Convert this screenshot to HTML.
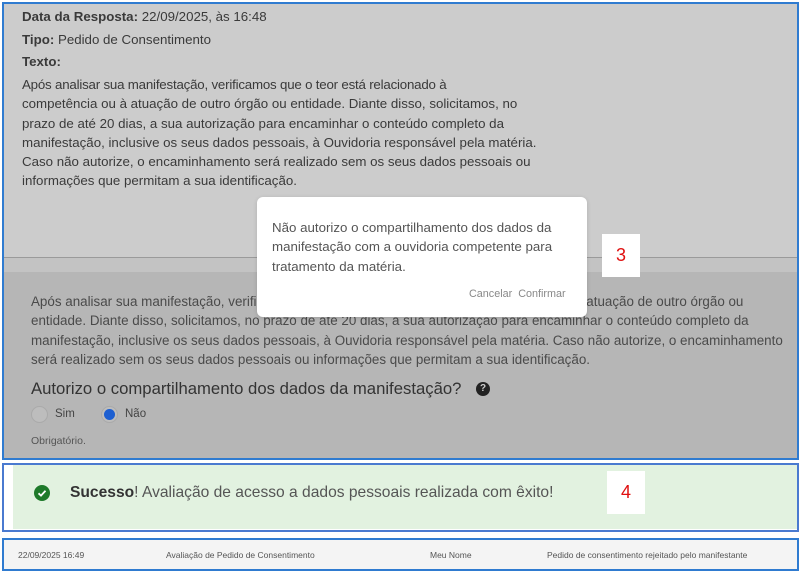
<!DOCTYPE html>
<html><head><meta charset="utf-8"><style>
*{margin:0;padding:0;box-sizing:border-box}
body{width:800px;height:573px;background:#fff;font-family:"Liberation Sans",sans-serif;position:relative;overflow:hidden}
.a{position:absolute;white-space:nowrap}
.t{font-size:13.3px;color:#3a3a3a}
.l{font-size:13.4px;color:#4a4a4a}
</style></head><body>
<div class="a" style="left:2px;top:2px;width:797px;height:458px;border:2px solid #2f7bd0;background:#cccccc;overflow:hidden">
  <div class="a" style="left:0;top:253px;width:100%;height:1px;background:#9a9a9a"></div>
  <div class="a" style="left:0;top:254px;width:100%;height:14px;background:#c3c3c3"></div>
  <div class="a" style="left:0;top:268px;width:100%;height:200px;background:#b6b6b6"></div>
</div>
<div class="a t" style="left:22px;top:9px"><b>Data da Resposta:</b> 22/09/2025, às 16:48</div>
<div class="a t" style="left:22px;top:32px"><b>Tipo:</b> Pedido de Consentimento</div>
<div class="a t" style="left:22px;top:54px"><b>Texto:</b></div>
<div class="a t" style="left:22px;top:75px;line-height:19.3px"><span style="letter-spacing:-0.2px">Após analisar sua manifestação, verificamos que o teor está relacionado à</span><br>competência ou à atuação de outro órgão ou entidade. Diante disso, solicitamos, no<br>prazo de até 20 dias, a sua autorização para encaminhar o conteúdo completo da<br>manifestação, inclusive os seus dados pessoais, à Ouvidoria responsável pela matéria.<br>Caso não autorize, o encaminhamento será realizado sem os seus dados pessoais ou<br>informações que permitam a sua identificação.</div>
<div class="a l" style="left:31px;top:292px;line-height:19.3px">Após analisar sua manifestação, verificamos que o teor está relacionado à competência ou à atuação de outro órgão ou<br>entidade. Diante disso, solicitamos, no prazo de até 20 dias, a sua autorização para encaminhar o conteúdo completo da<br>manifestação, inclusive os seus dados pessoais, à Ouvidoria responsável pela matéria. Caso não autorize, o encaminhamento<br>será realizado sem os seus dados pessoais ou informações que permitam a sua identificação.</div>
<div class="a" style="left:31px;top:379px;font-size:16.7px;color:#333">Autorizo o compartilhamento dos dados da manifestação?</div>
<div class="a" style="left:476px;top:382px;width:14px;height:14px;border-radius:50%;background:#222;color:#ccc;font-size:10px;font-weight:bold;text-align:center;line-height:14px">?</div>
<div class="a" style="left:31px;top:406px;width:17px;height:17px;border-radius:50%;border:1px solid #aaa;background:#bdbdbd"></div>
<div class="a" style="left:55px;top:408px;font-size:11.5px;color:#444">Sim</div>
<div class="a" style="left:101px;top:406px;width:17px;height:17px;border-radius:50%;border:1px solid #aaa;background:#bdbdbd"></div>
<div class="a" style="left:104px;top:409px;width:11px;height:11px;border-radius:50%;background:#1d5fd1"></div>
<div class="a" style="left:125px;top:408px;font-size:11.5px;color:#444">Não</div>
<div class="a" style="left:31px;top:435px;font-size:10.5px;color:#555">Obrigatório.</div>

<div class="a" style="left:257px;top:197px;width:330px;height:120px;background:#fff;border-radius:6px;box-shadow:0 1px 4px rgba(0,0,0,.15)"></div>
<div class="a" style="left:272px;top:218px;font-size:13.3px;color:#555;line-height:19.3px">Não autorizo o compartilhamento dos dados da<br>manifestação com a ouvidoria competente para<br>tratamento da matéria.</div>
<div class="a" style="left:469px;top:288px;font-size:10.8px;color:#888">Cancelar&nbsp; Confirmar</div>

<div class="a" style="left:602px;top:234px;width:38px;height:43px;background:#fff;color:#e01010;font-size:18px;text-align:center;line-height:43px">3</div>

<div class="a" style="left:2px;top:463px;width:797px;height:69px;border:2px solid #4a7ad0;background:#fff"></div>
<div class="a" style="left:13px;top:465px;width:784px;height:64px;background:#e2f2e0"></div>
<div class="a" style="left:34px;top:485px;width:16px;height:16px;border-radius:50%;background:#1e7a2a"></div>
<svg class="a" style="left:34px;top:485px" width="16" height="16"><path d="M4.5 8.3 L7 10.6 L11.5 5.8" stroke="#fff" stroke-width="1.8" fill="none"/></svg>
<div class="a" style="left:70px;top:484px;font-size:15.6px;color:#555"><b style="color:#333">Sucesso</b>! Avaliação de acesso a dados pessoais realizada com êxito!</div>
<div class="a" style="left:607px;top:471px;width:38px;height:43px;background:#fff;color:#e01010;font-size:18px;text-align:center;line-height:43px">4</div>

<div class="a" style="left:2px;top:538px;width:797px;height:33px;border:2px solid #2f7bd0;background:#f4f4f4"></div>
<div class="a" style="left:18px;top:550px;font-size:8.5px;color:#555">22/09/2025 16:49</div>
<div class="a" style="left:166px;top:550px;font-size:8.5px;color:#555">Avaliação de Pedido de Consentimento</div>
<div class="a" style="left:430px;top:550px;font-size:8.5px;color:#555">Meu Nome</div>
<div class="a" style="left:547px;top:550px;font-size:8.5px;color:#555">Pedido de consentimento rejeitado pelo manifestante</div>
</body></html>
